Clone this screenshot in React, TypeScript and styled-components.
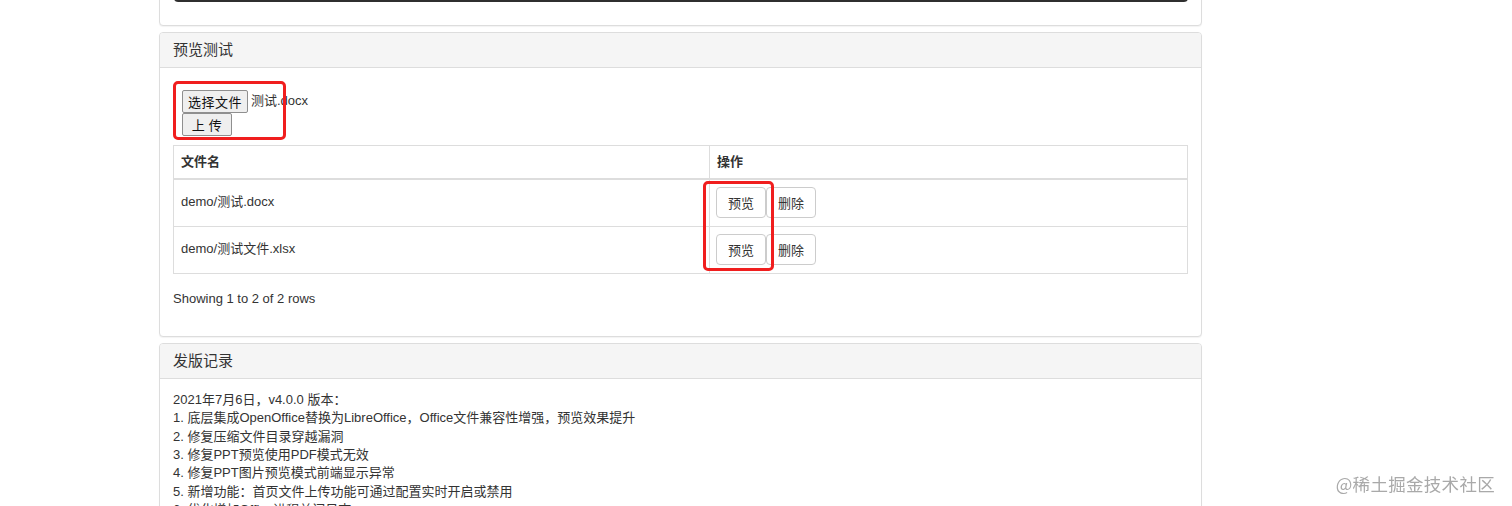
import React from "react";
import styled, { createGlobalStyle } from "styled-components";

const GlobalStyle = createGlobalStyle`
  html, body {
    margin: 0;
    padding: 0;
    background: #fff;
    overflow: hidden;
  }
  body {
    font-family: "Liberation Sans", "Noto Sans CJK SC", sans-serif;
    font-size: 13px;
    line-height: 18.4px;
    color: #333;
  }
`;

const Page = styled.div`
  width: 1043px;
  margin: -100px 0 0 159px;
  display: flex;
  flex-direction: column;
  gap: 6px;
`;

const Panel = styled.div`
  border: 1px solid #ddd;
  border-radius: 4px;
  background: #fff;
  box-shadow: 0 1px 1px rgba(0, 0, 0, 0.05);
  overflow: hidden;
`;

const PanelHeading = styled.div`
  background: #f5f5f5;
  border-bottom: 1px solid #ddd;
  padding: 8px 13px;
  font-size: 15px;
  line-height: 17.5px;
  color: #333;
`;

const PanelBody = styled.div<{ $pt?: number; $pb?: number }>`
  padding: ${(p) => p.$pt ?? 14}px 13px ${(p) => p.$pb ?? 14}px;
`;

const DarkBlock = styled.div`
  height: 87px;
  margin-left: 1px;
  background: #fff;
  border: 3px solid #2f2f2f;
  border-top: none;
  border-radius: 0 0 4px 4px;
  box-sizing: border-box;
`;

const UploadForm = styled.div`
  position: relative;
  padding: 8px 0 0 9px;
  display: flex;
  flex-direction: column;
  align-items: flex-start;
`;

const FileRow = styled.div`
  display: flex;
  align-items: center;
  gap: 3px;
`;

const NativeButton = styled.button<{ $w: number }>`
  width: ${(p) => p.$w}px;
  height: 23px;
  padding: 0;
  font-family: "Noto Sans CJK SC", sans-serif;
  font-size: 13px;
  color: #111;
  background: #efefef;
  border: 1px solid #8f8f8f;
  border-radius: 2px;
  letter-spacing: 0.5px;
`;

const FileName = styled.span`
  font-size: 13px;
  color: #333;
`;

const RedBox = styled.div<{ $l: number; $t: number; $w: number; $h: number }>`
  position: absolute;
  left: ${(p) => p.$l}px;
  top: ${(p) => p.$t}px;
  width: ${(p) => p.$w}px;
  height: ${(p) => p.$h}px;
  border: 3px solid #f01e1e;
  border-radius: 5px;
  box-sizing: border-box;
  pointer-events: none;
`;

const TableWrap = styled.div`
  position: relative;
  margin-top: 9px;
`;

const Table = styled.table`
  width: 100%;
  border-collapse: collapse;
  border: 1px solid #ddd;

  th, td {
    text-align: left;
    border-left: 1px solid #ddd;
    border-top: 1px solid #ddd;
    line-height: 18.4px;
    vertical-align: middle;
  }
  th {
    padding: 7px 7px;
    font-weight: bold;
    border-bottom: 2px solid #ddd;
  }
  td {
    padding: 7px 7px 8px;
  }
`;

const ActionGroup = styled.div`
  display: flex;
  margin-left: -1px;
`;

const ActionButton = styled.button`
  height: 31px;
  padding: 0 11px;
  font-family: "Noto Sans CJK SC", sans-serif;
  font-size: 13px;
  color: #333;
  background: #fff;
  border: 1px solid #ccc;
  border-radius: 4px;
`;

const Footer = styled.div`
  margin-top: 16px;
`;

const LogLine = styled.div`
  white-space: nowrap;
`;

const Watermark = styled.div`
  position: fixed;
  right: 17px;
  bottom: 13px;
  font-family: "Noto Sans CJK SC", sans-serif;
  font-size: 17.5px;
  color: #a9a9a9;
  letter-spacing: 0.3px;
`;

const files = ["demo/测试.docx", "demo/测试文件.xlsx"];

const logs = [
  "2021年7月6日，v4.0.0 版本：",
  "1. 底层集成OpenOffice替换为LibreOffice，Office文件兼容性增强，预览效果提升",
  "2. 修复压缩文件目录穿越漏洞",
  "3. 修复PPT预览使用PDF模式无效",
  "4. 修复PPT图片预览模式前端显示异常",
  "5. 新增功能：首页文件上传功能可通过配置实时开启或禁用",
  "6. 优化增加Office进程关闭日志",
];

export default function App() {
  return (
    <>
      <GlobalStyle />
      <Page>
        <Panel>
          <PanelBody $pb={23}>
            <DarkBlock />
          </PanelBody>
        </Panel>

        <Panel>
          <PanelHeading>预览测试</PanelHeading>
          <PanelBody $pb={28}>
            <UploadForm>
              <FileRow>
                <NativeButton $w={66}>选择文件</NativeButton>
                <FileName>测试.docx</FileName>
              </FileRow>
              <NativeButton $w={50}>上 传</NativeButton>
              <RedBox $l={0} $t={-1} $w={113} $h={59} />
            </UploadForm>
            <TableWrap>
              <Table>
                <thead>
                  <tr>
                    <th style={{ width: 521 }}>文件名</th>
                    <th>操作</th>
                  </tr>
                </thead>
                <tbody>
                  {files.map((f) => (
                    <tr key={f}>
                      <td>{f}</td>
                      <td>
                        <ActionGroup>
                          <ActionButton>预览</ActionButton>
                          <ActionButton>删除</ActionButton>
                        </ActionGroup>
                      </td>
                    </tr>
                  ))}
                </tbody>
              </Table>
              <RedBox $l={530} $t={36} $w={71} $h={90} />
            </TableWrap>
            <Footer>Showing 1 to 2 of 2 rows</Footer>
          </PanelBody>
        </Panel>

        <Panel>
          <PanelHeading>发版记录</PanelHeading>
          <PanelBody $pt={12}>
            {logs.map((l) => (
              <LogLine key={l}>{l}</LogLine>
            ))}
          </PanelBody>
        </Panel>
      </Page>
      <Watermark>@稀土掘金技术社区</Watermark>
    </>
  );
}
